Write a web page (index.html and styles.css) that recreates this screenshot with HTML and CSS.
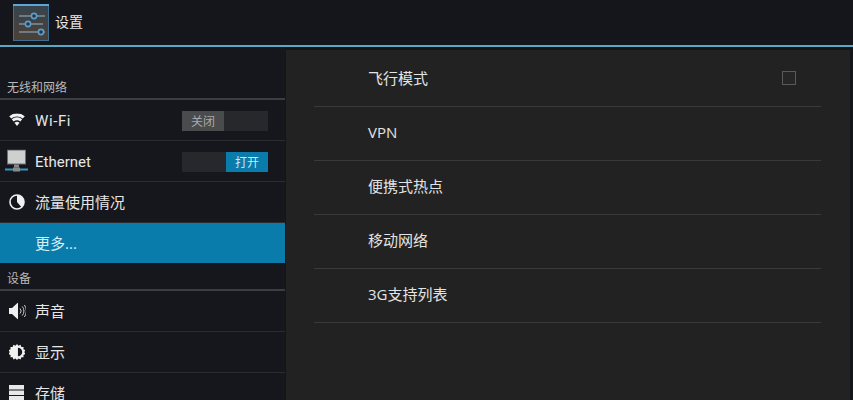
FILE: index.html
```html
<!DOCTYPE html>
<html lang="zh">
<head>
<meta charset="utf-8">
<title>设置</title>
<link rel="stylesheet" href="styles.css">
</head>
<body>
<header class="actionbar">
  <svg class="app-icon" width="36" height="37" viewBox="0 0 36 37">
    <defs><linearGradient id="ig" x1="0" y1="0" x2="0" y2="1"><stop offset="0" stop-color="#36444f"/><stop offset="1" stop-color="#4c4036"/></linearGradient></defs>
    <rect x="0.5" y="0.5" width="35" height="36" fill="url(#ig)" stroke="#3f6f92"/>
    <rect x="0" y="0" width="36" height="2" fill="#5ba6d6"/>
    <g stroke="#8aa3b6" stroke-width="1.2" fill="none">
      <path d="M6 12H32"/><path d="M6 20H30"/><path d="M6 28H32"/>
    </g>
    <g stroke="#5b9dcc" stroke-width="1.6" fill="#2b3640">
      <circle cx="21" cy="12" r="2.6"/><circle cx="15" cy="20" r="2.6"/><circle cx="28" cy="28" r="2.6"/>
    </g>
  </svg>
  <span class="title">设置</span>
</header>
<div class="rule"></div>
<div class="main">
  <nav class="side">
    <div class="cat first">无线和网络</div>
    <div class="item">
      <svg class="ico" width="16" height="13" viewBox="0 0 20 16"><path d="M10 15.5 6.8 11.4a5 5 0 0 1 6.4 0Z" fill="#f2f2f2"/><path d="M5.8 10 3.5 7.1a10 10 0 0 1 13 0l-2.3 2.9a7 7 0 0 0-8.4 0Z" fill="#f2f2f2"/><path d="M2.8 6.2 0.3 3.3a14.8 14.8 0 0 1 19.4 0l-2.5 2.9a11.6 11.6 0 0 0-14.4 0Z" fill="#f2f2f2"/></svg>
      <span class="lbl lat wide">Wi-Fi</span>
      <span class="toggle"><span class="knob off">关闭</span></span>
    </div>
    <div class="item">
      <svg class="ico eth" width="23" height="23" viewBox="0 0 23 23"><rect x="2.5" y="0.5" width="18" height="14" fill="#cfcfcf" stroke="#6f6f6f"/><rect x="9" y="15" width="5" height="3" fill="#8a8a8a"/><rect x="0" y="19" width="8" height="2" fill="#3f93bd"/><rect x="15" y="19" width="8" height="2" fill="#3f93bd"/><rect x="8" y="18" width="7" height="4" fill="#8a8a8a"/></svg>
      <span class="lbl lat">Ethernet</span>
      <span class="toggle on"><span class="knob">打开</span></span>
    </div>
    <div class="item">
      <svg class="ico" width="16" height="16" viewBox="0 0 16 16"><circle cx="8" cy="8" r="7" fill="none" stroke="#f0f0f0" stroke-width="1.6"/><path d="M8 1a7 7 0 0 1 4.6 12.3L8 8Z" fill="#f0f0f0"/></svg>
      <span class="lbl zh">流量使用情况</span>
    </div>
    <div class="item active"><span class="lbl zh">更多...</span></div>
    <div class="cat">设备</div>
    <div class="item">
      <svg class="ico" width="17" height="17" viewBox="0 0 17 17"><path d="M0 5.5H3L9 0V17L3 11.5H0Z" fill="#efefef"/><path d="M11 6a3.6 3.6 0 0 1 0 5M13.3 4a7 7 0 0 1 0 9M15.4 2.5a10 10 0 0 1 0 12" fill="none" stroke="#c8c8c8" stroke-width="1"/></svg>
      <span class="lbl zh">声音</span>
    </div>
    <div class="item">
      <svg class="ico" width="16" height="16" viewBox="0 0 17 17"><path d="M8.5 0l1.6 1.8 2.2-1 .8 2.3 2.4.1-.2 2.4 2.2 1-1.3 2 1.3 2-2.2 1 .2 2.4-2.4.1-.8 2.3-2.2-1-1.6 1.6-1.6-1.6-2.2 1-.8-2.3-2.4-.1.2-2.4-2.2-1 1.3-2-1.3-2 2.2-1-.2-2.4 2.4-.1.8-2.3 2.2 1Z" fill="#f0f0f0"/><path d="M9.5 4a4.5 4.5 0 0 1 0 9Z" fill="#15171c"/></svg>
      <span class="lbl zh">显示</span>
    </div>
    <div class="item">
      <svg class="ico" width="15" height="16" viewBox="0 0 15 16"><rect y="0" width="15" height="4.5" fill="#e8e8e8"/><rect y="5.5" width="15" height="4.5" fill="#e8e8e8"/><rect y="11" width="15" height="4.5" fill="#e8e8e8"/></svg>
      <span class="lbl zh">存储</span>
    </div>
  </nav>
  <section class="panel">
    <div class="row"><span>飞行模式</span><span class="check"></span></div>
    <div class="row"><span>VPN</span></div>
    <div class="row"><span>便携式热点</span></div>
    <div class="row"><span>移动网络</span></div>
    <div class="row"><span>3G支持列表</span></div>
  </section>
</div>
</body>
</html>
```
FILE: styles.css
```css
* { box-sizing: border-box; }
html, body { margin: 0; height: 400px; overflow: hidden; background: #131519; }
body { font-family: "Open Sans", "Noto Sans CJK SC", sans-serif; color: #e6e6e6; }
.actionbar { height: 45px; display: flex; align-items: center; padding: 0 0 0 13px; gap: 6px; background: #14161c; }
.app-icon { flex: none; }
.title { font-size: 14px; line-height: 18px; color: #e8e8e8; margin-top: -1px; }
.rule { height: 2px; background: #5aa9c4; }
.main { display: flex; height: 353px; overflow: hidden; }
.side { width: 285px; flex: none; background: #15171c; }
.cat { height: 28px; padding: 4px 0 0 7px; font-size: 12px; line-height: 15px; color: #b9b9b9; display: flex; align-items: center; border-bottom: 2px solid #3c3d40; }
.cat.first { height: 53px; padding-top: 29px; }
.item { height: 41px; display: flex; align-items: center; position: relative; border-bottom: 1px solid #2a2c30; padding: 1px 17px 0 0; }
.ico { position: absolute; left: 9px; top: 50%; transform: translateY(-50%); }
.eth { left: 5px; }
.lbl { margin-left: 35px; font-size: 15px; line-height: 20px; color: #e6e6e6; flex: 1; }
.lbl.zh { margin-top: -2px; }
.lbl.lat { font-family: "Roboto", sans-serif; }
.lbl.wide { letter-spacing: 0.6px; }
.active { background: #0a7cac; border-bottom: 0; height: 40px; }
.active .lbl { color: #d8eef6; }
.toggle { width: 86px; height: 20px; background: #26282b; display: flex; flex: none; }
.toggle.on { justify-content: flex-end; }
.knob { width: 42px; height: 20px; background: #0a7cac; color: #cfe6ef; font-size: 12px; display: flex; align-items: center; justify-content: center; }
.knob.off { background: #4a4b4d; color: #a9a9a9; }
.panel { flex: 1; margin: 3px 3px 0 1px; background: #222222; padding: 3px 0 0 28px; }
.row { height: 54px; width: 507px; padding: 0 25px 3px 54px; display: flex; align-items: center; justify-content: space-between; font-size: 15px; line-height: 20px; color: #e4e4e4; border-bottom: 1px solid #3a3a3a; }
.check { width: 14px; height: 14px; border: 1px solid #5a5a5a; background: #262626; }
```
